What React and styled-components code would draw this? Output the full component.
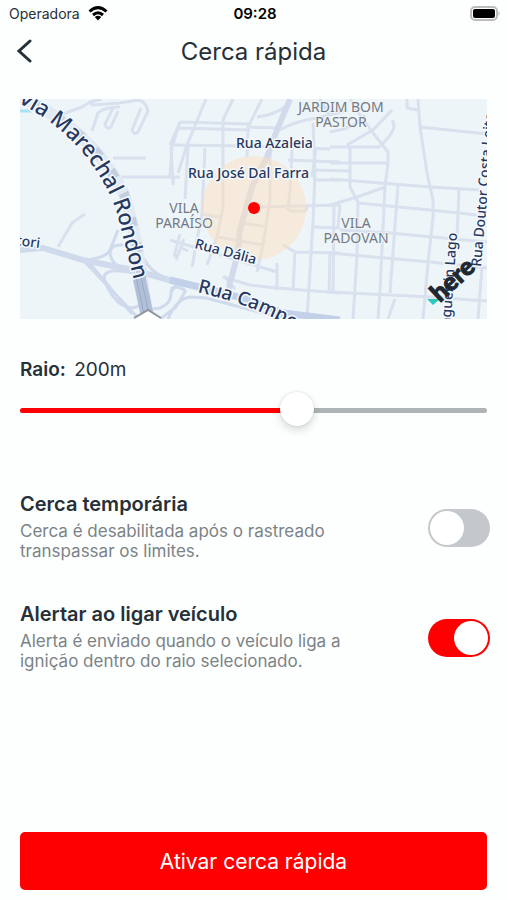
import { useState } from "react";
import styled, { createGlobalStyle } from "styled-components";

const roads = [
  "M40 16 L62 8 L70 3 L82 0",
  "M70 3 L72 6 L100 4 L118 1 Q126 2 128 12 L118 33 Q114 37 112 31 L121 9",
  "M72 32 L78 14 Q84 8 100 8 M98 12 L91 28 Q86 31 85 25 L93 9",
  "M93 59 H126 M102 78 L160 78 M153 78 V86 M150 77 L152 48 L160 23",
  "M38 148 L52 124 L65 115 M160 148 L168 152 M156 161 L164 140",
  "M186 0 L167 46 L158 74 M213 0 L203 21 L203 108 L197 138 L187 166",
  "M242 0 L228 28 L227 58 M160 23 L228 25 M160 23 L150 46 M158 29 L230 31",
  "M150 46 L230 47 L310 50 M260 31 Q275 22 297 19 L325 12 M230 28 L258 29",
  "M237 18 Q255 16 266 7 M293 24 L295 74 L293 124 L287 220 M272 51 L270 92 L268 108",
  "M250 54 L250 101 L243 146 L237 173 M185 49 L182 114 L172 168 M168 47 L165 100",
  "M151 48 L153 84 M240 108 L320 106 M265 108 L271 112 H285 L288 107",
  "M182 115 L200 118 M223 124 L247 128 M197 138 L243 146 M150 141 L257 173",
  "M257 164 L257 191 M263 146 L275 153 L320 154 M275 153 L273 191 M310 154 L309 193",
  "M203 178 L230 186 L257 189 L320 194 M160 135 L154 158 M204 177 L215 190",
  "M268 61 L320 63 M293 71 L330 72 M293 81 L320 81 M293 128 L320 129 M320 106 L318 128",
  "M310 48 H360 M327 46 L353 31 L372 11 M372 21 Q379 30 360 47 M310 64 H368",
  "M330 0 L338 13 L353 34 L368 53 L368 64 L365 88 L360 191 L358 220",
  "M330 48 V88 L338 103 L337 157 L333 220 M310 80 L410 88 L460 91 M310 106 L337 98 L365 88",
  "M338 104 L410 111 L467 117 M320 131 L370 134 L467 143 M310 154 L410 163 L467 169",
  "M310 193 L410 198 L467 202 M387 0 V9 L398 11 M400 28 L467 35",
  "M398 0 L400 28 L407 74 L413 101 L413 118 L408 164 L403 220",
  "M378 86 L370 194 M439 91 L437 138 M462 168 L458 220 M314 106 L313 193 M375 200 L368 220",
  "M310 33 L324 30 Q340 24 345 16 M296 50 L292 78 M310 17 L300 0",
];

const ramps = [
  "M98 131 L90 151 Q85 160 63 161 M63 161 L119 220 M67 161 L112 215",
  "M103 146 Q90 145 90 155 Q92 166 105 171 M113 174 Q86 168 84 178 Q86 190 97 202 Q110 213 120 206",
  "M124 160 Q130 172 145 179 L165 184 M165 191 Q151 184 151 193 Q152 204 140 209 L132 210",
  "M166 191 L156 208 L140 220 M148 220 Q156 200 170 198 L186 199 L262 219 M160 182 L151 193",
];

const highway = "M-10 -9 L22 9 Q78 42 104 95 Q116 133 122 180 L128 220";

const MapView = () => (
  <MapFrame viewBox="0 0 467 220" preserveAspectRatio="xMidYMid slice" role="img" aria-label="Mapa da cerca">
    <rect width="467" height="220" fill="#eef5f9" />
    <g fill="none" stroke="#d9e0ee" strokeWidth="3" strokeLinejoin="round">
      {roads.map((d) => (
        <path key={d} d={d} />
      ))}
    </g>
    <g fill="none" stroke="#d0daed" strokeWidth="3">
      {ramps.map((d) => (
        <path key={d} d={d} />
      ))}
      <path d="M0 151 L23 149 L63 161 L113 171 L160 184" strokeWidth="6" />
      <path d="M150 181 L183 189 L230 201 L263 214 L320 221" stroke="#c3d0e9" strokeWidth="7" />
      <path d="M270 0 L257 31 L247 58 L232 88 L220 131 L217 158 L210 184 L207 204" stroke="#d3daeb" strokeWidth="6" />
    </g>
    <circle cx="234" cy="109" r="52" fill="#fbdfbd" opacity="0.5" />
    <path d={highway} fill="none" stroke="#e2e9f3" strokeWidth="12" />
    <path d={highway} fill="none" stroke="#c3cede" strokeWidth="10" strokeDasharray="9 17" />
    <path d="M119 178 L128 220" stroke="#b1bfd8" strokeWidth="13" />
    <path d="M116 178 L125 220 M121 178 L130 220" stroke="#9aacca" strokeWidth="1" />
    <path d="M114 221 L128 211 L141 221 Z" fill="#fff" />
    <path d="M114 219 L128 211 L141 219" fill="none" stroke="#8f959c" strokeWidth="2" />
    <path d="M0 12 H12" stroke="#a6e3f7" strokeWidth="3" />
    <path id="marechal" d="M-78 -35 L1 5 Q42 27 67 59 Q91 91 98 118 L114 181" fill="none" />
    <path id="campos" d="M177 193 Q240 208 275 231" fill="none" />

    <District x="321" y="13">JARDIM BOM</District>
    <District x="321" y="28">PASTOR</District>
    <District x="164" y="114">VILA</District>
    <District x="164" y="129">PARAÍSO</District>
    <District x="336" y="129">VILA</District>
    <District x="336" y="144">PADOVAN</District>
    <Street x="216" y="49">Rua Azaleia</Street>
    <Street x="168" y="79">Rua José Dal Farra</Street>
    <Street transform="translate(174 149) rotate(15)">Rua Dália</Street>
    <Street transform="translate(-4 146) rotate(7)">tori</Street>
    <Street transform="translate(461 168) rotate(-85)">Rua Doutor Costa Leite</Street>
    <Street transform="translate(437 134) rotate(-86)" textAnchor="end">Domingues in Lago</Street>
    <Street $size="19px">
      <textPath href="#campos">Rua Campos</textPath>
    </Street>
    <Street $size="22px" textAnchor="end">
      <textPath href="#marechal" startOffset="100%">Rodovia Marechal Rondon</textPath>
    </Street>

    <path d="M407 200 H420 L413 206 Z" fill="#2ec9c0" />
    <Brand transform="translate(420 204) rotate(-43)">here</Brand>
    <circle cx="234" cy="109" r="6" fill="#f00" />
  </MapFrame>
);

const Setting = ({ id, title, text, defaultChecked }) => (
  <Row>
    <div>
      <Label htmlFor={id}>{title}</Label>
      <Desc id={`${id}-desc`}>{text}</Desc>
    </div>
    <Toggle id={id} type="checkbox" role="switch" aria-describedby={`${id}-desc`} defaultChecked={defaultChecked} />
  </Row>
);

const App = () => {
  const [radius, setRadius] = useState(200);
  const fill = ((radius - 50) / 250) * 100;

  return (
    <Screen>
      <GlobalStyle />
      <StatusBar>
        <Carrier>
          Operadora
          <svg width="20" height="15" viewBox="0 0 20 15" aria-hidden="true">
            <g fill="none" stroke="#000" strokeWidth="3">
              <path d="M1.5 5.5 Q10 -2.2 18.5 5.5" />
              <path d="M5 9 Q10 4.6 15 9" />
            </g>
            <path d="M6.8 11 Q10 8.5 13.2 11 L10 14.5 Z" />
          </svg>
        </Carrier>
        <Clock>09:28</Clock>
        <Battery width="31" height="15" viewBox="0 0 31 15" aria-hidden="true">
          <rect x="1" y="1" width="26" height="13" rx="4" fill="#fff" stroke="#bdbdbd" strokeWidth="2" />
          <rect x="3" y="3" width="22" height="9" rx="2" />
          <path d="M28.5 5 Q31 7.5 28.5 10 Z" fill="#bdbdbd" />
        </Battery>
      </StatusBar>
      <Header>
        <Back type="button" aria-label="Voltar">
          <svg width="16" height="24" viewBox="0 0 16 24">
            <path d="M14 2 L3 12 L14 22" fill="none" stroke="#263037" strokeWidth="3" strokeLinecap="round" />
          </svg>
        </Back>
        <Title>Cerca rápida</Title>
      </Header>
      <Content>
        <MapView />
        <RadiusLabel htmlFor="radius">
          <b>Raio:</b> {radius}m
        </RadiusLabel>
        <Slider
          id="radius"
          type="range"
          min="50"
          max="300"
          step="10"
          value={radius}
          style={{ "--fill": `${fill}%` }}
          onChange={(e) => setRadius(Number(e.target.value))}
        />
        <Settings>
          <Setting
            id="temporary"
            title="Cerca temporária"
            text="Cerca é desabilitada após o rastreado transpassar os limites."
          />
          <Setting
            id="ignition"
            title="Alertar ao ligar veículo"
            text="Alerta é enviado quando o veículo liga a ignição dentro do raio selecionado."
            defaultChecked
          />
        </Settings>
        <Submit type="button">Ativar cerca rápida</Submit>
      </Content>
    </Screen>
  );
};

const GlobalStyle = createGlobalStyle`
  * {
    box-sizing: border-box;
  }
  body {
    margin: 0;
    background-color: #fdfefe;
    color: #263037;
    font-family: Inter, "Liberation Sans", sans-serif;
  }
`;

const Screen = styled.main`
  min-height: 100vh;
  display: flex;
  flex-direction: column;
`;

const StatusBar = styled.div`
  height: 27px;
  padding: 0 6px 0 9px;
  display: grid;
  grid-template-columns: 1fr auto 1fr;
  align-items: center;
  font-size: 14px;
`;

const Carrier = styled.span`
  display: flex;
  align-items: center;
  gap: 8px;
`;

const Clock = styled.time`
  color: black;
  font-size: 15px;
  font-weight: 600;
`;

const Battery = styled.svg`
  justify-self: end;
`;

const Header = styled.header`
  height: 48px;
  padding: 0 16px;
  display: grid;
  grid-template-columns: 32px 1fr 32px;
  align-items: center;
`;

const Back = styled.button`
  height: 32px;
  padding: 0;
  border: none;
  background: none;
  display: flex;
  align-items: center;
  cursor: pointer;
`;

const Title = styled.h1`
  margin: 0;
  font-size: 24px;
  font-weight: 400;
  text-align: center;
`;

const Content = styled.div`
  flex: 1;
  padding: 24px 20px 10px;
  display: flex;
  flex-direction: column;
`;

const MapFrame = styled.svg`
  width: 100%;
  height: 220px;
  display: block;
`;

const District = styled.text`
  fill: #747a84;
  stroke: #eef5f9;
  stroke-width: 2px;
  paint-order: stroke;
  font-family: "Noto Sans", sans-serif;
  font-size: 14px;
  text-anchor: middle;
`;

const Street = styled.text`
  fill: #263960;
  stroke: #f4f8fc;
  stroke-width: 3px;
  paint-order: stroke;
  font-family: "Noto Sans", sans-serif;
  font-size: ${(props) => props.$size || "14px"};
  font-weight: 500;
`;

const Brand = styled.text`
  fill: #202730;
  stroke: #202730;
  stroke-width: 1px;
  font-family: Lato, sans-serif;
  font-size: 25px;
  font-weight: 900;
`;

const RadiusLabel = styled.label`
  margin-top: 38px;
  font-size: 19px;
  line-height: 26px;

  b {
    margin-right: 3px;
    font-weight: 600;
  }
`;

const Slider = styled.input`
  width: 100%;
  height: 36px;
  margin: 9px 0 0;
  appearance: none;
  background: none;
  cursor: pointer;

  &::-webkit-slider-runnable-track {
    height: 5px;
    border-radius: 3px;
    background: linear-gradient(to right, #f00 var(--fill), #aeb3b6 var(--fill));
  }

  &::-webkit-slider-thumb {
    width: 34px;
    height: 34px;
    margin-top: -16px;
    appearance: none;
    border-radius: 50%;
    background-color: white;
    box-shadow: 0 4px 8px rgba(0, 0, 0, 0.15), 0 0 2px rgba(0, 0, 0, 0.15);
  }
`;

const Settings = styled.div`
  margin: 63px -3px 0 0;
  display: flex;
  flex-direction: column;
  gap: 40px;
`;

const Row = styled.div`
  display: flex;
  align-items: center;
  justify-content: space-between;
  gap: 60px;
`;

const Label = styled.label`
  display: block;
  font-size: 20px;
  font-weight: 600;
  line-height: 26px;
`;

const Desc = styled.p`
  margin: 4px 0 0;
  color: #7c8386;
  font-size: 17px;
  line-height: 20px;
`;

const Toggle = styled.input`
  flex: none;
  width: 62px;
  height: 38px;
  margin: 4px 0 0;
  padding: 2px;
  appearance: none;
  display: flex;
  border-radius: 19px;
  background-color: #c4c8cb;
  cursor: pointer;

  &::before {
    content: "";
    width: 34px;
    height: 34px;
    border-radius: 50%;
    background-color: white;
  }

  &:checked {
    justify-content: flex-end;
    background-color: #f00;
  }
`;

const Submit = styled.button`
  height: 58px;
  margin-top: auto;
  border: none;
  border-radius: 5px;
  background-color: #f00;
  color: white;
  font-family: inherit;
  font-size: 21px;
  cursor: pointer;
`;

export default App;
